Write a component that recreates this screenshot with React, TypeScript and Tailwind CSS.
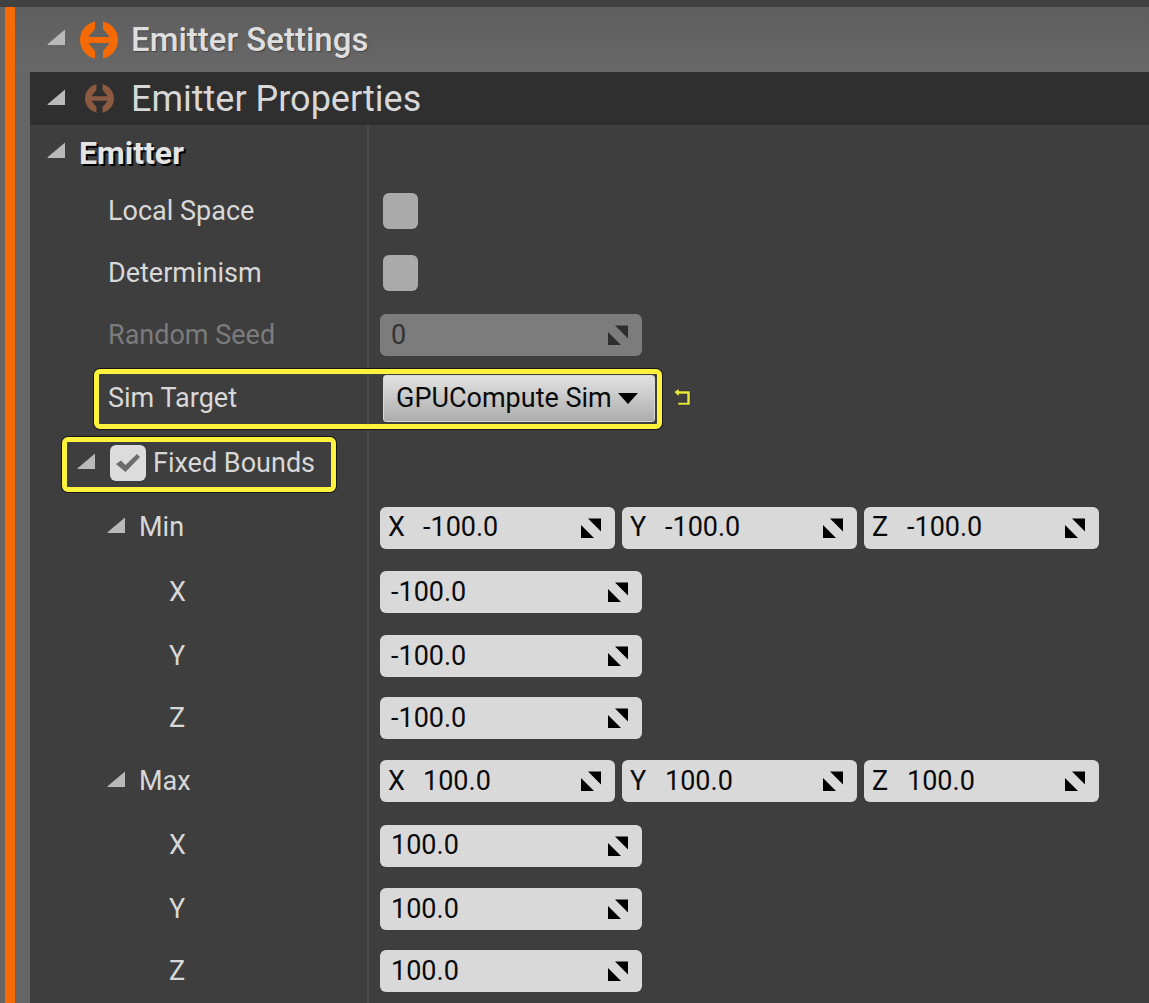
import type { ReactNode } from "react";

function Arrow({ className = "" }: { className?: string }) {
  return (
    <svg viewBox="0 0 19 17" className={`w-[19px] h-[17px] shrink-0 ${className}`}>
      <path d="M18 0.5 V16 H1 Q0 16 0.8 15 Z" fill="#b9b9b9" />
    </svg>
  );
}

function EmitterIcon({ size, color }: { size: number; color: string }) {
  return (
    <svg viewBox="0 0 38 38" width={size} height={size} className="shrink-0">
      <path
        d="M15 .43A19 19 0 0 0 15 37.57V30L9 23V22H29V23L23 30V37.57A19 19 0 0 0 23 .43V8L29 15V16H9V15L15 8Z"
        fill={color}
      />
    </svg>
  );
}

function Grip({ color = "#000000" }: { color?: string }) {
  return (
    <svg viewBox="0 0 20 20" className="w-5 h-5 shrink-0">
      <path d="M7 0.5H20V13.5Z" fill={color} />
      <path d="M0 7V20H13Z" fill={color} />
    </svg>
  );
}

function NumField({ label, value, disabled }: { label?: string; value: string; disabled?: boolean }) {
  return (
    <div
      className={`h-[42px] flex items-center rounded-md text-[27px] ${
        label ? "w-[235px] pl-[8px] pr-[14px]" : "w-[262px] pl-[11px] pr-[14px]"
      } ${disabled ? "bg-[#7c7c7c] text-[#333333]" : "bg-[#d9d9d9] text-[#0a0a0a]"}`}
    >
      {label && <span className="w-[35px]">{label}</span>}
      <span className="flex-1">{value}</span>
      <Grip color={disabled ? "#2e2e2e" : "#000000"} />
    </div>
  );
}

function Row({
  h,
  indent,
  label,
  children,
  muted,
  arrow,
}: {
  h: string;
  indent: string;
  label?: ReactNode;
  children?: ReactNode;
  muted?: boolean;
  arrow?: boolean;
}) {
  return (
    <div className={`flex ${h}`}>
      <div
        className={`w-[339px] shrink-0 flex items-center border-r-2 border-[#4b4b4b] ${indent} ${
          muted ? "text-[#7b7b7b]" : "text-[#d8d8d8]"
        }`}
      >
        {arrow && <Arrow className="mr-[13px] -mt-[4px]" />}
        {label}
      </div>
      <div className="flex-1 flex items-center gap-[7px] pl-[11px]">{children}</div>
    </div>
  );
}

function Vector({ a, b, c }: { a: string; b: string; c: string }) {
  return (
    <>
      <NumField label="X" value={a} />
      <NumField label="Y" value={b} />
      <NumField label="Z" value={c} />
    </>
  );
}

export default function App() {
  return (
    <div
      className="h-[1003px] overflow-hidden bg-[#656565] flex flex-col text-[27px] leading-none"
      style={{ fontFamily: "Roboto, sans-serif" }}
    >
      <div className="h-[7px] shrink-0 bg-[#414141]" />
      <div className="flex-1 flex pl-[5px] min-h-0">
        <div className="w-[10px] shrink-0 bg-[#f56a05]" />
        <div className="flex-1 flex flex-col min-w-0">
          <div className="h-[65px] shrink-0 flex items-center pl-[32px] bg-gradient-to-b from-[#5e5e5e] to-[#686868]">
            <Arrow className="-mt-[4px]" />
            <div className="ml-[14px] mr-[13px]">
              <EmitterIcon size={38} color="#f56a05" />
            </div>
            <span className="text-[33px] font-medium text-[#dedede] [text-shadow:1px_1px_1px_#444444]">
              Emitter Settings
            </span>
          </div>
          <div className="flex-1 pl-[15px] bg-[#656565] min-h-0">
            <div className="h-full bg-[#3e3e3e]">
              <div className="h-[53px] flex items-center pl-[17px] bg-[#2f2f2f]">
                <Arrow className="-mt-[3px]" />
                <div className="ml-[19px] mr-[17px]">
                  <EmitterIcon size={29} color="#8c5a40" />
                </div>
                <span className="text-[36px] text-[#d8d8d8]">Emitter Properties</span>
              </div>

              <Row
                h="h-[55px]"
                indent="pl-[17px]"
                arrow
                label={
                  <span className="text-[32px] font-bold -ml-[0px] text-[#e4e4e4] [text-shadow:2px_2px_0_#000000]">
                    Emitter
                  </span>
                }
              />
              <Row h="h-[62px]" indent="pl-[78px]" label="Local Space">
                <div className="w-[35px] h-[36px] ml-[3px] rounded-md bg-[#aaaaaa]" />
              </Row>
              <Row h="h-[62px]" indent="pl-[78px]" label="Determinism">
                <div className="w-[35px] h-[36px] ml-[3px] rounded-md bg-[#aaaaaa]" />
              </Row>
              <Row h="h-[62px]" indent="pl-[78px]" label="Random Seed" muted>
                <NumField value="0" disabled />
              </Row>

              <div className="relative">
                <Row h="h-[64px]" indent="pl-[78px]" label="Sim Target">
                  <div className="w-[272px] h-[47px] ml-[3px] flex items-center justify-between pl-[12px] pr-[16px] rounded-[3px] border border-[#d8d8d8] bg-gradient-to-b from-[#e2e2e2] to-[#adadad] text-[#0a0a0a]">
                    <span>GPUCompute Sim</span>
                    <svg viewBox="0 0 20 11" className="w-5 h-[11px] shrink-0">
                      <path d="M0 0H20L10 11Z" fill="#000000" />
                    </svg>
                  </div>
                  <svg viewBox="0 0 20 20" className="w-5 h-5 ml-[11px] shrink-0">
                    <path
                      d="M1 4L6 0.5V3H17V17H5V14.5H14V6H6V8.5Z"
                      fill="#e8e83a"
                      stroke="#2a2a2a"
                      strokeWidth="0.5"
                    />
                  </svg>
                </Row>
                <div className="absolute left-[64px] top-[3px] w-[568px] h-[60px] rounded-md border-[5px] border-[#fdf23c] shadow-[0_0_0_1px_#151515] pointer-events-none" />
              </div>

              <div className="relative">
                <Row
                  h="h-[66px]"
                  indent="pl-[47px]"
                  arrow={false}
                  label={
                    <>
                      <Arrow className="-mt-[4px]" />
                      <div className="w-[36px] h-[36px] ml-[14px] mr-[7px] rounded-md bg-[#dcdcdc] flex items-center justify-center">
                        <svg viewBox="0 0 28 24" className="w-7 h-6">
                          <path d="M2 13L7 9.5L11.5 14L23 3L26 6L11.5 21Z" fill="#6b6b6b" />
                        </svg>
                      </div>
                      Fixed Bounds
                    </>
                  }
                />
                <div className="absolute left-[32px] top-[7px] w-[274px] h-[55px] rounded-md border-[5px] border-[#fdf23c] shadow-[0_0_0_1px_#151515] pointer-events-none" />
              </div>

              <Row h="h-[63px]" indent="pl-[77px]" arrow={false} label={<><Arrow className="mr-[13px] -mt-[4px]" />Min</>}>
                <Vector a="-100.0" b="-100.0" c="-100.0" />
              </Row>
              <Row h="h-[66px]" indent="pl-[139px]" label="X"><NumField value="-100.0" /></Row>
              <Row h="h-[62px]" indent="pl-[139px]" label="Y"><NumField value="-100.0" /></Row>
              <Row h="h-[62px]" indent="pl-[139px]" label="Z"><NumField value="-100.0" /></Row>
              <Row h="h-[64px]" indent="pl-[77px]" label={<><Arrow className="mr-[13px] -mt-[4px]" />Max</>}>
                <Vector a="100.0" b="100.0" c="100.0" />
              </Row>
              <Row h="h-[65px]" indent="pl-[139px]" label="X"><NumField value="100.0" /></Row>
              <Row h="h-[62px]" indent="pl-[139px]" label="Y"><NumField value="100.0" /></Row>
              <Row h="h-[62px]" indent="pl-[139px]" label="Z"><NumField value="100.0" /></Row>
              <div className="w-[339px] h-[20px] border-r-2 border-[#4b4b4b]" />
            </div>
          </div>
        </div>
      </div>
    </div>
  );
}
